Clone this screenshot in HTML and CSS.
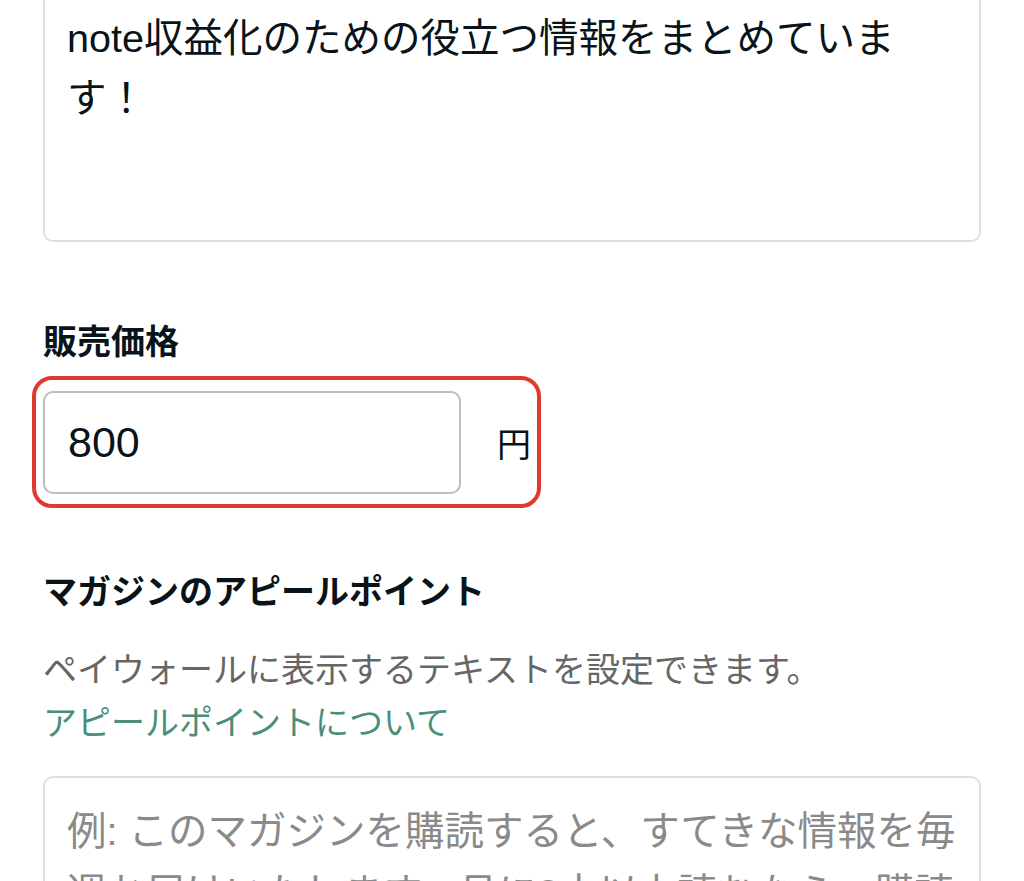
FILE: index.html
```html
<!DOCTYPE html>
<html lang="ja">
<head>
    <meta charset="UTF-8">
    <meta name="viewport" content="width=device-width, initial-scale=1.0">
    <title>マガジン設定</title>
    <link rel="stylesheet" href="styles.css">
</head>
<body>
    <div class="page">
        <div class="field-box description">note収益化のための役立つ情報をまとめています！</div>

        <div class="section price-section">
            <label class="label" for="price">販売価格</label>
            <div class="price-row">
                <input type="text" id="price" class="price-input" value="800">
                <span class="unit">円</span>
                <span class="highlight"></span>
            </div>
        </div>

        <div class="section appeal-section">
            <h3 class="label">マガジンのアピールポイント</h3>
            <p class="help">ペイウォールに表示するテキストを設定できます。<br><a href="#" class="link">アピールポイントについて</a></p>
            <div class="field-box placeholder">例: このマガジンを購読すると、すてきな情報を毎週お届けいたします。月に2本以上読むなら、購読がお得です。</div>
        </div>
    </div>
</body>
</html>
```

FILE: styles.css
```css
body {
    margin: 0;
    background-color: #fff;
    font-family: "Liberation Sans", "Noto Sans CJK JP", sans-serif;
    color: #08131a;
    overflow: hidden;
    height: 881px;
}
.page {
    padding: 0 43px;
    margin-top: -18px;
}
.field-box {
    border: 2px solid #e0e0e0;
    border-radius: 10px;
    padding: 24px 22px;
    font-size: 39.5px;
    line-height: 60px;
    box-sizing: border-box;
}
.description {
    height: 260px;
}
.placeholder {
    color: #8a8a8a;
    height: 200px;
    padding-top: 22px;
    line-height: 62px;
}
.section {
    margin-top: 74px;
}
.label {
    display: block;
    margin: 0;
    font-size: 34px;
    line-height: 52px;
    font-weight: bold;
}
.price-row {
    position: relative;
    display: flex;
    align-items: center;
    margin-top: 23px;
}
.price-input {
    width: 418px;
    height: 103px;
    box-sizing: border-box;
    border: 2px solid #bdbdbd;
    border-radius: 10px;
    padding: 0 23px;
    font-family: inherit;
    font-size: 43px;
    color: #08131a;
    margin: 0;
}
.unit {
    margin-left: 36px;
    font-size: 34px;
}
.highlight {
    position: absolute;
    left: -11px;
    top: -15px;
    width: 509px;
    height: 132px;
    box-sizing: border-box;
    border: 4px solid #e03a2e;
    border-radius: 20px;
}
.appeal-section {
    margin-top: 72px;
}
.help {
    margin: 26px 0 26px;
    font-size: 34px;
    line-height: 53px;
    color: #666;
}
.link {
    color: #4b8f7b;
    text-decoration: none;
}
```
